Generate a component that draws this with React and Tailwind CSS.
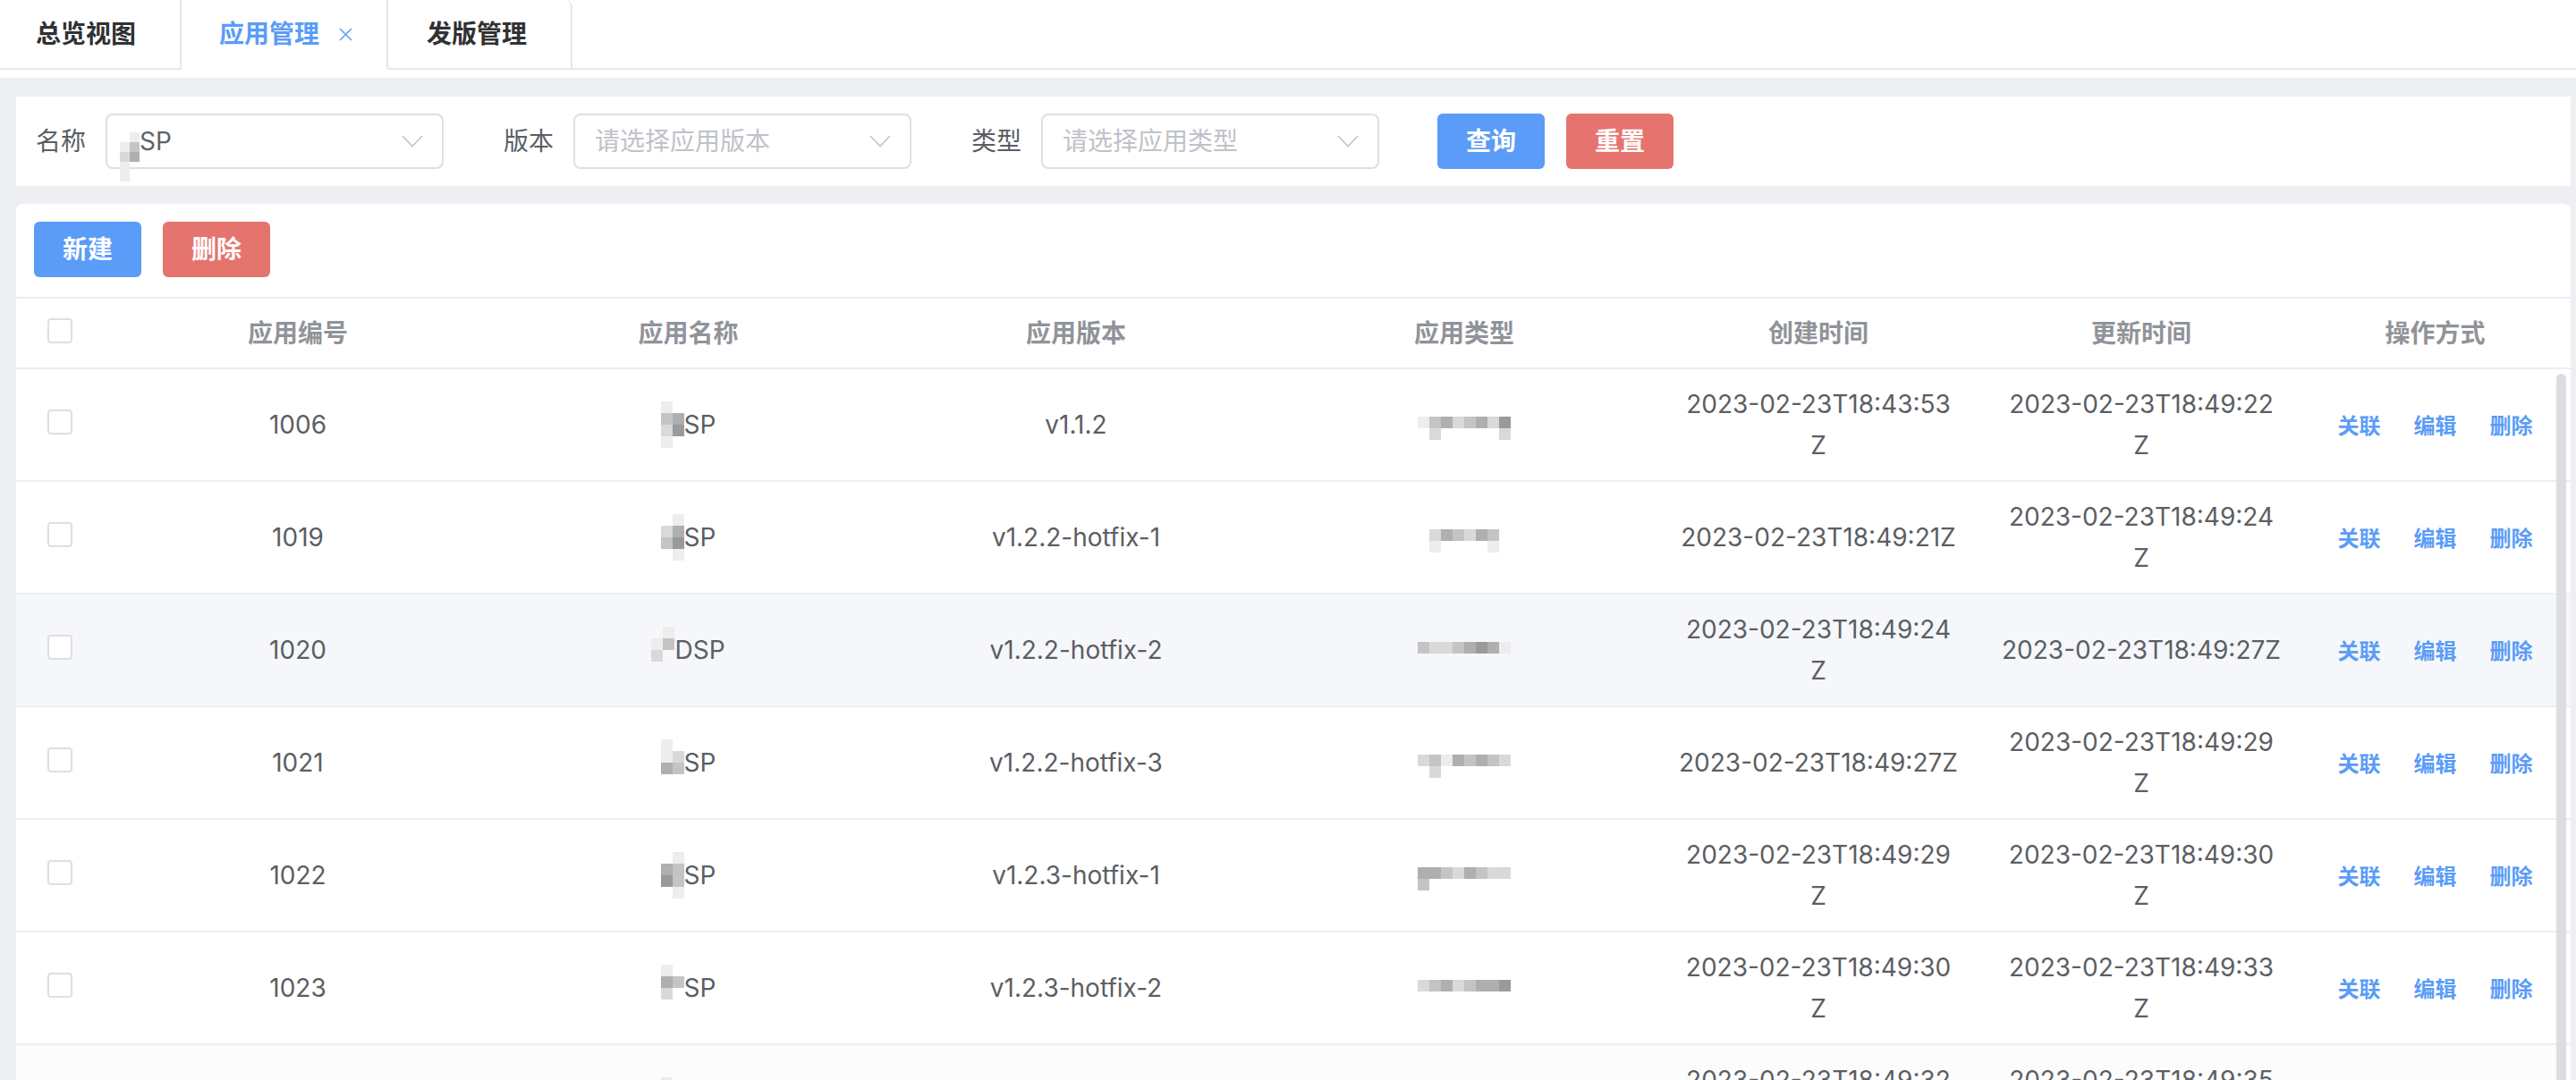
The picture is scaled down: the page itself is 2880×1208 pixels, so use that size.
import React from 'react'

const COLS = 'grid grid-cols-[90px_450px_423px_444px_424px_368px_354px_1fr]'

const G = {
  a: '#ededee',
  b: '#d9d9da',
  c: '#c4c4c5',
  d: '#afafb0',
  e: '#9a9a9b',
  '.': null,
}

const rows = [
  {
    id: '1006', name: 'SP', ver: 'v1.1.2',
    created: '2023-02-23T18:43:53Z', cWrap: true,
    updated: '2023-02-23T18:49:22Z', uWrap: true,
    nameMask: ['a.', 'cd', 'be', 'a.'],
    typeMask: ['acdbcdbe', '.b.....b'],
  },
  {
    id: '1019', name: 'SP', ver: 'v1.2.2-hotfix-1',
    created: '2023-02-23T18:49:21Z', cWrap: false,
    updated: '2023-02-23T18:49:24Z', uWrap: true,
    nameMask: ['.a', 'bd', 'ce', '.a'],
    typeMask: ['.bdcbdc.', '.a....a.'],
  },
  {
    id: '1020', name: 'DSP', ver: 'v1.2.2-hotfix-2',
    created: '2023-02-23T18:49:24Z', cWrap: true,
    updated: '2023-02-23T18:49:27Z', uWrap: false, hover: true,
    nameMask: ['.a', 'ac', 'b.', '..'],
    typeMask: ['cbbcdeda', '........'],
  },
  {
    id: '1021', name: 'SP', ver: 'v1.2.2-hotfix-3',
    created: '2023-02-23T18:49:27Z', cWrap: false,
    updated: '2023-02-23T18:49:29Z', uWrap: true,
    nameMask: ['a.', 'ab', 'dc', '..'],
    typeMask: ['bcadcdcb', '.b......'],
  },
  {
    id: '1022', name: 'SP', ver: 'v1.2.3-hotfix-1',
    created: '2023-02-23T18:49:29Z', cWrap: true,
    updated: '2023-02-23T18:49:30Z', uWrap: true,
    nameMask: ['.a', 'dc', 'ec', '.a'],
    typeMask: ['ddcbdcbb', 'c.......'],
  },
  {
    id: '1023', name: 'SP', ver: 'v1.2.3-hotfix-2',
    created: '2023-02-23T18:49:30Z', cWrap: true,
    updated: '2023-02-23T18:49:33Z', uWrap: true,
    nameMask: ['a.', 'dc', 'b.', '..'],
    typeMask: ['bcdbcdde', '........'],
  },
  {
    id: '1024', name: 'SP', ver: 'v1.2.3-hotfix-3',
    created: '2023-02-23T18:49:32Z', cWrap: true,
    updated: '2023-02-23T18:49:35Z', uWrap: true,
    nameMask: ['a.', 'cd', 'b.', '..'],
    typeMask: ['cbdcbdcb', '........'],
  },
]

function Mosaic({ pattern, cell = 13 }) {
  return (
    <span className="inline-flex flex-col">
      {pattern.map((line, i) => (
        <span key={i} className="flex">
          {line.split('').map((ch, j) => (
            <span
              key={j}
              style={{ width: cell, height: cell, backgroundColor: G[ch] || 'transparent' }}
            />
          ))}
        </span>
      ))}
    </span>
  )
}

function Checkbox() {
  return <span className="block h-[28px] w-[28px] rounded-[4px] border-2 border-[#dcdfe6] bg-white" />
}

function Chevron() {
  return (
    <svg width="24" height="14" viewBox="0 0 24 14" fill="none">
      <polyline points="1,1 12,12.5 23,1" stroke="#c0c4cc" strokeWidth="1.6" />
    </svg>
  )
}

function Select({ children }) {
  return (
    <div className="flex h-[62px] w-[378px] items-center justify-between rounded-[8px] border-2 border-[#dcdfe6] bg-white pl-[14px] pr-[21px] text-[28px]">
      <div className="flex items-center">{children}</div>
      <Chevron />
    </div>
  )
}

function DateCell({ value, wrap }) {
  return (
    <div className="flex items-center justify-center whitespace-nowrap text-center leading-[46px]">
      {wrap ? (
        <span>
          {value.slice(0, -1)}
          <br />Z
        </span>
      ) : (
        value
      )}
    </div>
  )
}

export default function App() {
  return (
    <div className="h-[1208px] w-full overflow-hidden bg-[#eeeff3] font-['Inter','Noto_Sans_CJK_SC',sans-serif] text-[#5b5e63]">
      {/* Tabs */}
      <div className="h-[87px] bg-white">
        <div className="flex h-[78px] text-[28px] font-semibold">
          <div className="flex h-[78px] w-[203px] items-center border-r-2 border-b-2 border-[#e4e7ed] pl-[40px] text-[#303133]">
            总览视图
          </div>
          <div className="flex h-[78px] w-[231px] items-center border-r-2 border-b-2 border-[#e4e7ed] border-b-white pl-[42px] text-[#5a9cf8]">
            应用管理
            <svg className="ml-[22px]" width="15" height="15" viewBox="0 0 15 15">
              <path d="M1 1 L14 14 M14 1 L1 14" stroke="#5a9cf8" strokeWidth="1.5" />
            </svg>
          </div>
          <div className="flex h-[78px] w-[206px] items-center rounded-tr-[8px] border-r-2 border-b-2 border-[#e4e7ed] pl-[43px] text-[#303133]">
            发版管理
          </div>
          <div className="h-[78px] flex-1 border-b-2 border-[#e4e7ed]" />
        </div>
      </div>

      <div className="pt-[21px] pl-[18px] pr-[6px]">
        {/* Filter form */}
        <div className="flex h-[100px] items-center bg-white pl-[22px] text-[28px]">
          <span className="w-[56px] whitespace-nowrap">名称</span>
          <div className="ml-[22px]">
            <Select>
              <span className="mt-[14px]">
                <Mosaic pattern={['.a', 'ac', 'bd', 'a.', 'a.']} cell={11} />
              </span>
              <span className="text-[#606266]">SP</span>
            </Select>
          </div>
          <span className="ml-[67px] w-[56px] whitespace-nowrap">版本</span>
          <div className="ml-[22px]">
            <Select>
              <span className="pl-[8px] text-[#bfc2c9]">请选择应用版本</span>
            </Select>
          </div>
          <span className="ml-[67px] w-[56px] whitespace-nowrap">类型</span>
          <div className="ml-[22px]">
            <Select>
              <span className="pl-[8px] text-[#bfc2c9]">请选择应用类型</span>
            </Select>
          </div>
          <button className="ml-[65px] h-[62px] w-[120px] rounded-[6px] bg-[#5a9cf8] text-[28px] font-semibold text-white">
            查询
          </button>
          <button className="ml-[24px] h-[62px] w-[120px] rounded-[6px] bg-[#e5746f] text-[28px] font-semibold text-white">
            重置
          </button>
        </div>

        {/* Table card */}
        <div className="mt-[20px] rounded-t-[8px] bg-white">
          <div className="flex gap-[24px] px-[20px] pt-[20px] pb-[22px]">
            <button className="h-[62px] w-[120px] rounded-[6px] bg-[#5a9cf8] text-[28px] font-semibold text-white">
              新建
            </button>
            <button className="h-[62px] w-[120px] rounded-[6px] bg-[#e5746f] text-[28px] font-semibold text-white">
              删除
            </button>
          </div>

          {/* Header */}
          <div className={`${COLS} h-[81px] border-y-2 border-[#ebeef5] text-[28px] font-semibold text-[#909399]`}>
            <div className="flex items-center pl-[35px] pb-[6px]">
              <Checkbox />
            </div>
            <div className="flex items-center justify-center">应用编号</div>
            <div className="flex items-center justify-center">应用名称</div>
            <div className="flex items-center justify-center">应用版本</div>
            <div className="flex items-center justify-center">应用类型</div>
            <div className="flex items-center justify-center">创建时间</div>
            <div className="flex items-center justify-center">更新时间</div>
            <div className="flex items-center justify-center">操作方式</div>
          </div>

          {/* Body */}
          <div className="relative">
            {rows.map((r, i) => (
              <div
                key={r.id}
                className={`${COLS} h-[126px] border-b-2 border-[#ebeef5] text-[28px] leading-[46px] ${
                  r.hover ? 'bg-[#f5f7fa]' : i === 6 ? 'bg-[#fcfcfd]' : 'bg-white'
                }`}
              >
                <div className="flex items-center pl-[35px] pb-[6px]">
                  <Checkbox />
                </div>
                <div className="flex items-center justify-center">{r.id}</div>
                <div className="flex items-center justify-center">
                  <Mosaic pattern={r.nameMask} cell={13} />
                  <span>{r.name}</span>
                </div>
                <div className="flex items-center justify-center whitespace-nowrap">{r.ver}</div>
                <div className="flex items-center justify-center pt-[8px]">
                  <Mosaic pattern={r.typeMask} cell={13} />
                </div>
                <DateCell value={r.created} wrap={r.cWrap} />
                <DateCell value={r.updated} wrap={r.uWrap} />
                <div className="flex items-center justify-center gap-[37px] pt-[4px] text-[24px] font-semibold text-[#5a9cf8]">
                  <span>关联</span>
                  <span>编辑</span>
                  <span>删除</span>
                </div>
              </div>
            ))}
            {/* scrollbar thumb */}
            <div className="absolute top-[5px] right-[5px] bottom-0 w-[11px] rounded-t-full bg-[#dcdde0]" />
          </div>
        </div>
      </div>
    </div>
  )
}
